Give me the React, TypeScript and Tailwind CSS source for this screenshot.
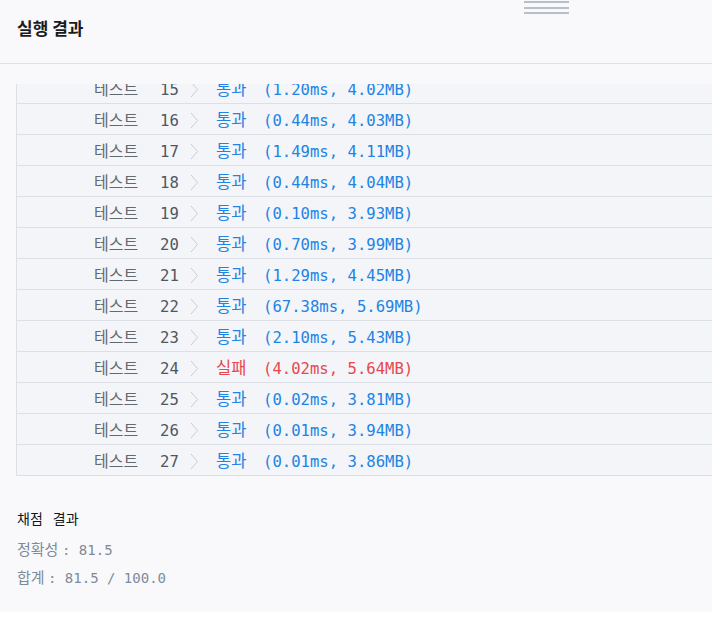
import React from "react";

const KR = "'Noto Sans CJK KR', 'Noto Sans', sans-serif";
const MONO = "'DejaVu Sans Mono', 'Liberation Mono', monospace";

type Row = { n: number; ok: boolean; t: string };

const rows: Row[] = [
  { n: 15, ok: true, t: "(1.20ms, 4.02MB)" },
  { n: 16, ok: true, t: "(0.44ms, 4.03MB)" },
  { n: 17, ok: true, t: "(1.49ms, 4.11MB)" },
  { n: 18, ok: true, t: "(0.44ms, 4.04MB)" },
  { n: 19, ok: true, t: "(0.10ms, 3.93MB)" },
  { n: 20, ok: true, t: "(0.70ms, 3.99MB)" },
  { n: 21, ok: true, t: "(1.29ms, 4.45MB)" },
  { n: 22, ok: true, t: "(67.38ms, 5.69MB)" },
  { n: 23, ok: true, t: "(2.10ms, 5.43MB)" },
  { n: 24, ok: false, t: "(4.02ms, 5.64MB)" },
  { n: 25, ok: true, t: "(0.02ms, 3.81MB)" },
  { n: 26, ok: true, t: "(0.01ms, 3.94MB)" },
  { n: 27, ok: true, t: "(0.01ms, 3.86MB)" },
];

function Chevron() {
  return (
    <svg width="9" height="17" viewBox="0 0 9 17" className="block shrink-0">
      <polyline points="1,1 7.5,8.5 1,16" fill="none" stroke="#c9cdd2" strokeWidth="1" />
    </svg>
  );
}

function ResultRow({ r }: { r: Row }) {
  const color = r.ok ? "text-[#2184e4]" : "text-[#e5484d]";
  return (
    <div className="flex h-[31px] items-center border-b border-[#dcdfe5] bg-[#f4f5f9] pl-[77px]">
      <div className="flex h-[24px] items-baseline pt-[3px]">
        <span className="w-[48px] text-[16px] leading-[18px] text-[#626970]" style={{ fontFamily: KR }}>
          테스트
        </span>
        <span className="ml-[18px] w-[20px] text-[15.6px] leading-[18px] text-[#4f5760]" style={{ fontFamily: MONO }}>
          {r.n}
        </span>
        <span className="ml-[10px] self-center">
          <Chevron />
        </span>
        <span className={`ml-[17px] w-[34px] text-[16.5px] leading-[18px] ${color}`} style={{ fontFamily: KR }}>
          {r.ok ? "통과" : "실패"}
        </span>
        <span className={`ml-[13px] text-[15.6px] leading-[18px] ${color}`} style={{ fontFamily: MONO }}>
          {r.t}
        </span>
      </div>
    </div>
  );
}

export default function App() {
  return (
    <div className="h-[631px] w-[712px] overflow-hidden bg-white">
      <div className="relative h-[612px] bg-[#f9f9fc]">
        <div className="absolute left-[524px] top-0 flex w-[45px] flex-col gap-[3.5px] pt-[1px]">
          <div className="h-[2px] bg-[#b9bfc6]" />
          <div className="h-[2px] bg-[#b9bfc6]" />
          <div className="h-[2px] bg-[#b9bfc6]" />
        </div>
        <div className="flex h-[64px] items-start border-b border-[#dde0e6] pl-[17px] pt-[19px]">
          <span className="text-[17px] font-bold leading-none text-[#1b1c1e]" style={{ fontFamily: KR }}>
            실행 결과
          </span>
        </div>
        <div className="ml-[16px] mt-[20px] h-[392px] overflow-hidden border-l border-[#dcdfe5]">
          <div className="mt-[-11px]">
            {rows.map((r) => (
              <ResultRow key={r.n} r={r} />
            ))}
          </div>
        </div>
        <div className="flex flex-col pl-[17px] pt-[31px]">
          <div className="flex h-[22px] items-center text-[14px] leading-none text-[#151515]" style={{ fontFamily: KR }}>
            <span>채점</span>
            <span className="ml-[10px]">결과</span>
          </div>
          <div className="mt-[9px] flex h-[22px] items-baseline leading-[22px] text-[#7d8b99]">
            <span className="w-[45px] text-[15px]" style={{ fontFamily: KR }}>
              정확성
            </span>
            <span className="text-[14px]" style={{ fontFamily: MONO }}>
              : 81.5
            </span>
          </div>
          <div className="mt-[6px] flex h-[22px] items-baseline leading-[22px] text-[#7d8b99]">
            <span className="w-[31px] text-[15px]" style={{ fontFamily: KR }}>
              합계
            </span>
            <span className="text-[14px]" style={{ fontFamily: MONO }}>
              : 81.5 / 100.0
            </span>
          </div>
        </div>
      </div>
    </div>
  );
}
